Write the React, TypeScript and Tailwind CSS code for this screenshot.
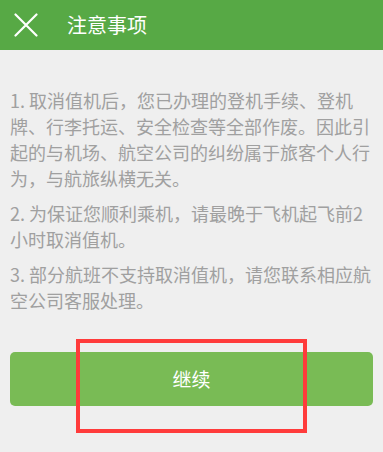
const notes = [
  '1. 取消值机后，您已办理的登机手续、登机牌、行李托运、安全检查等全部作废。因此引起的与机场、航空公司的纠纷属于旅客个人行为，与航旅纵横无关。',
  '2. 为保证您顺利乘机，请最晚于飞机起飞前2小时取消值机。',
  '3. 部分航班不支持取消值机，请您联系相应航空公司客服处理。',
]

export default function App() {
  return (
    <div
      className="relative h-[452px] w-[383px] overflow-hidden bg-[#efefef]"
      style={{ fontFamily: '"Noto Sans CJK SC", "Noto Sans", sans-serif' }}
    >
      {/* Header */}
      <div className="flex h-[50px] items-center bg-[#57a945]">
        <svg
          viewBox="0 0 24 24"
          className="ml-[14px] h-[24px] w-[24px]"
          fill="none"
          stroke="white"
          strokeWidth={2.2}
          strokeLinecap="round"
        >
          <path d="M1.5 1.5 22.5 22.5M22.5 1.5 1.5 22.5" />
        </svg>
        <span className="ml-[29px] text-[20px] text-white">注意事项</span>
      </div>

      {/* Notes */}
      <div className="flex flex-col gap-[9px] pl-[10px] pr-[6px] pt-[37px]">
        {notes.map((n) => (
          <p key={n} className="text-[18px] leading-[26px] text-[#a0a0a0]">
            {n}
          </p>
        ))}
      </div>

      {/* Continue */}
      <div className="mt-[39px] px-[10px]">
        <button className="flex h-[54px] w-full items-center justify-center rounded-[5px] bg-[#79bb55] text-[19px] text-white">
          继续
        </button>
      </div>

      {/* annotation box */}
      <div className="absolute left-[76px] top-[339px] h-[94px] w-[231px] border-[4px] border-[#ff3b3b]" />
    </div>
  )
}
